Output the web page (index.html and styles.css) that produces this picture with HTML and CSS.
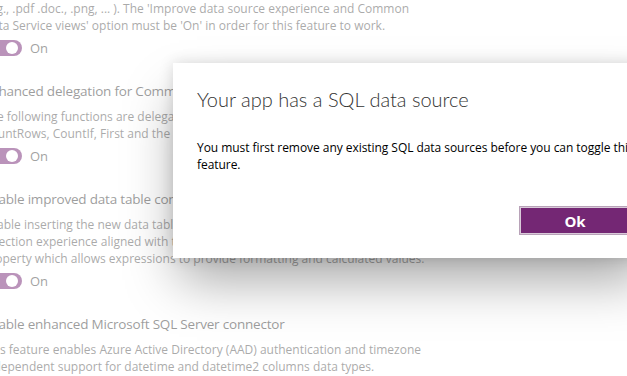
FILE: index.html
```html
<!DOCTYPE html>
<html lang="en">
<head>
  <meta charset="UTF-8">
  <title>Experimental features</title>
  <link rel="stylesheet" href="styles.css">
</head>
<body>
  <div class="settings">
    <div class="feature first">
      <p class="desc">Allows the attachments control to display a preview for supported file types<br>(e.g., .pdf .doc., .png, ... ). The 'Improve data source experience and Common<br>Data Service views' option must be 'On' in order for this feature to work.</p>
      <div class="switch-row"><span class="switch"></span><span class="switch-label">On</span></div>
    </div>

    <div class="feature">
      <h2>Enhanced delegation for Common Data Service</h2>
      <p class="desc">The following functions are delegated for Common Data Service: Sum, Min, Max,<br>CountRows, CountIf, First and the 'in' operator.</p>
      <div class="switch-row"><span class="switch"></span><span class="switch-label">On</span></div>
    </div>

    <div class="feature">
      <h2>Enable improved data table control selection and Value property</h2>
      <p class="desc">Enable inserting the new data table control with an updated row<br>selection experience aligned with the gallery control and a new Value<br>property which allows expressions to provide formatting and calculated values.</p>
      <div class="switch-row"><span class="switch"></span><span class="switch-label">On</span></div>
    </div>

    <div class="feature">
      <h2>Enable enhanced Microsoft SQL Server connector</h2>
      <p class="desc">This feature enables Azure Active Directory (AAD) authentication and timezone<br>independent support for datetime and datetime2 columns data types.</p>
    </div>
  </div>

  <div class="overlay"></div>

  <div class="dialog">
    <h1>Your app has a SQL data source</h1>
    <p>You must first remove any existing SQL data sources before you can toggle this feature.</p>
    <div class="dialog-actions">
      <button class="btn-ok">Ok</button>
    </div>
  </div>
</body>
</html>
```

FILE: styles.css
```css
html, body {
  margin: 0;
  height: 100%;
  overflow: hidden;
  background: white;
}
body {
  font-family: 'Open Sans', 'Noto Sans', sans-serif;
  color: #555;
}
.settings {
  margin: -17px 0 0 -17px;
  width: 700px;
}
.feature {
  margin-bottom: 24px;
}
.feature h2 {
  margin: 0 0 6px 0;
  font-size: 13.5px;
  font-weight: 400;
  letter-spacing: -0.2px;
  line-height: 22px;
  color: #3a3a3a;
  white-space: nowrap;
}
.desc {
  margin: 0;
  font-size: 12px;
  line-height: 17px;
  white-space: nowrap;
}
.switch-row {
  display: flex;
  align-items: center;
  gap: 8px;
  margin-top: 6px;
  height: 16px;
}
.switch {
  position: relative;
  width: 39px;
  height: 16px;
  border-radius: 8px;
  background: #742774;
}
.switch::after {
  content: '';
  position: absolute;
  right: 4px;
  top: 2px;
  width: 12px;
  height: 12px;
  border-radius: 50%;
  background: white;
}
.switch-label {
  font-size: 13px;
  color: #444;
}
.overlay {
  position: absolute;
  inset: 0;
  background: rgba(255,255,255,0.5);
}
.dialog {
  position: absolute;
  left: 173px;
  top: 63px;
  width: 480px;
  height: 195px;
  box-sizing: border-box;
  padding: 22px 24px 0 24px;
  background: white;
  box-shadow: 0 0 14px rgba(0,0,0,0.14), 0 28px 50px -6px rgba(0,0,0,0.35);
}
.dialog h1 {
  margin: 0;
  font-family: Lato, 'Open Sans', sans-serif;
  font-size: 20px;
  font-weight: 300;
  line-height: 28px;
  color: #333;
}
.dialog p {
  margin: 26px 0 0 0;
  font-size: 12px;
  letter-spacing: -0.05px;
  line-height: 17px;
  color: #000;
  width: 480px;
}
.dialog-actions {
  margin-top: 33px;
  padding-left: 322px;
}
.btn-ok {
  width: 112px;
  height: 29px;
  background: #742774;
  border: 1px solid #b8a2b8;
  box-shadow: inset 0 0 0 1px #d9cad9;
  color: white;
  font-family: 'Open Sans', sans-serif;
  font-size: 15px;
  font-weight: 700;
}
```
